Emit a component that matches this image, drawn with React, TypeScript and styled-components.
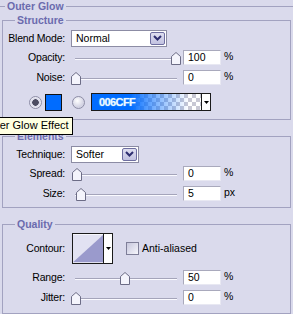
import React from 'react';
import styled, { createGlobalStyle } from 'styled-components';

const GlobalStyle = createGlobalStyle`
  html, body {
    margin: 0;
    padding: 0;
    background: #dadaec;
  }
  body {
    font-family: "Liberation Sans", Arial, sans-serif;
    font-size: 10.5px;
    color: #000;
  }
`;

const Panel = styled.div`
  position: relative;
  width: 293px;
  height: 314px;
  overflow: hidden;
  background: #dadaec;
`;

const OuterGroup = styled.fieldset`
  margin: 0;
  padding: 0;
  border: 0;
  border-top: 1px solid #a2a2c0;
  min-inline-size: 0;
`;

const Legend = styled.legend<{ $indent: number }>`
  margin-left: ${({ $indent }) => $indent}px;
  padding: 0 2px;
  font-weight: bold;
  font-size: 10.5px;
  line-height: 12px;
  color: #6b6bae;
`;

const Section = styled.fieldset<{ $top: number }>`
  margin: ${({ $top }) => $top}px 2px 0;
  padding: 0;
  border: 1px solid #a2a2c0;
  min-inline-size: 0;
`;

const Body = styled.div<{ $pt: number; $pb: number }>`
  display: flex;
  flex-direction: column;
  padding: ${({ $pt }) => $pt}px 0 ${({ $pb }) => $pb}px;
`;

const Row = styled.div<{ $mt?: number; $h?: number; $indent?: number }>`
  display: flex;
  align-items: center;
  height: ${({ $h }) => $h ?? 18}px;
  margin-top: ${({ $mt }) => $mt ?? 0}px;
  padding-left: ${({ $indent }) => $indent ?? 0}px;
`;

const Label = styled.span`
  width: 62px;
  margin-right: 6px;
  text-align: right;
  white-space: nowrap;
  letter-spacing: -0.2px;
`;

const SelectBox = styled.div<{ $w: number }>`
  display: flex;
  align-items: center;
  justify-content: space-between;
  box-sizing: border-box;
  width: ${({ $w }) => $w}px;
  height: 17px;
  padding: 0 1px 0 4px;
  background: #fff;
  border: 1px solid #8c8ca4;
`;

const DropButton = styled.span`
  display: flex;
  align-items: center;
  justify-content: center;
  box-sizing: border-box;
  width: 15px;
  height: 13px;
  background: linear-gradient(#dedef0, #c2c2e0);
  border: 1px solid #6e6ea0;
  border-radius: 2px;
`;

const SliderWrap = styled.div`
  position: relative;
  width: 112px;
  height: 18px;

  &::before {
    content: '';
    position: absolute;
    left: 4px;
    top: 10px;
    width: 102px;
    height: 1px;
    background: #a4a4ba;
    border-bottom: 1px solid #fafaff;
  }
`;

const Thumb = styled.svg`
  position: absolute;
  top: 4px;
  width: 10px;
  height: 13px;
`;

const NumBox = styled.div`
  box-sizing: border-box;
  width: 38px;
  height: 15px;
  padding: 0 4px;
  line-height: 13px;
  background: #fff;
  border: 1px solid #a9a9bc;
  border-right-color: #e8e8f2;
  border-bottom-color: #e8e8f2;
`;

const Unit = styled.span`
  margin-left: 3px;
  margin-top: -3px;
`;

const Radio = styled.span<{ $on?: boolean; $gap?: number }>`
  box-sizing: border-box;
  width: 13px;
  height: 13px;
  margin-left: ${({ $gap }) => $gap ?? 0}px;
  border-radius: 50%;
  border: 1px solid #8d8da6;
  background: ${({ $on }) =>
    $on
      ? 'radial-gradient(circle, #4c4c62 0 3px, #d6d6e6 3.5px, #f4f4fa 6px)'
      : 'radial-gradient(circle at 40% 35%, #ffffff 0, #d4d4e4 6px)'};
`;

const Swatch = styled.span`
  box-sizing: border-box;
  width: 17px;
  height: 17px;
  margin-left: 3px;
  background: #006cff;
  border: 1px solid #111;
`;

const GradientBox = styled.div`
  display: flex;
  box-sizing: border-box;
  width: 120px;
  height: 18px;
  margin-left: 6px;
  border: 1px solid #1a1a1a;
  background:
    linear-gradient(to right, #006cff 0%, #006cff 32%, rgba(0, 108, 255, 0.55) 52%, rgba(0, 108, 255, 0) 82%),
    repeating-conic-gradient(#c8c8d4 0 25%, #ffffff 0 50%) 0 0 / 8px 8px;
`;

const HexText = styled.span`
  flex: 1;
  padding-left: 7px;
  font-size: 11px;
  font-weight: bold;
  letter-spacing: -0.6px;
  line-height: 16px;
  color: #eef8ff;
  text-shadow: 0 0 1px #5fb4ff, 0 0 1px #5fb4ff;
`;

const ArrowPart = styled.span`
  display: flex;
  align-items: center;
  justify-content: center;
  width: 8px;
  background: #fff;
  border-left: 1px solid #1a1a1a;
`;

const ContourBox = styled.div`
  display: flex;
  box-sizing: border-box;
  width: 41px;
  height: 31px;
  margin-left: 1px;
  border: 1px solid #1a1a1a;
  background: #fff;
`;

const ContourPreview = styled.svg`
  width: 32px;
  height: 29px;
  display: block;
`;

const Check = styled.span`
  box-sizing: border-box;
  width: 13px;
  height: 13px;
  margin-left: 13px;
  border: 1px solid #7e7e98;
  background: linear-gradient(135deg, #c6c6dc, #f6f6fc);
`;

const CheckLabel = styled.span`
  margin-left: 3px;
`;

const Tooltip = styled.div`
  position: absolute;
  left: -22px;
  top: 117px;
  padding: 1px 3px 2px;
  font-size: 11px;
  line-height: 13px;
  white-space: nowrap;
  background: #ffffe1;
  border: 1px solid #000;
`;

function Chevron() {
  return (
    <svg width="9" height="6" viewBox="0 0 9 6">
      <path d="M1 1 L4.5 4.5 L8 1" fill="none" stroke="#2e2e70" strokeWidth="2" />
    </svg>
  );
}

function DownTriangle() {
  return (
    <svg width="5" height="3" viewBox="0 0 5 3">
      <path d="M0 0 H5 L2.5 3 Z" fill="#000" />
    </svg>
  );
}

function Select({ value, width }: { value: string; width: number }) {
  return (
    <SelectBox $w={width}>
      <span>{value}</span>
      <DropButton>
        <Chevron />
      </DropButton>
    </SelectBox>
  );
}

function Slider({ pos }: { pos: number }) {
  return (
    <SliderWrap>
      <Thumb viewBox="0 0 10 13" style={{ left: pos }}>
        <path
          d="M0.5 4.5 L5 0.5 L9.5 4.5 V12.5 H0.5 Z"
          fill="#f4f4fc"
          stroke="#6c6c86"
          strokeWidth="1"
        />
      </Thumb>
    </SliderWrap>
  );
}

function SliderRow({ label, pos, value, unit, mt }: { label: string; pos: number; value: string; unit: string; mt?: number }) {
  return (
    <Row $mt={mt}>
      <Label>{label}</Label>
      <Slider pos={pos} />
      <NumBox>{value}</NumBox>
      <Unit>{unit}</Unit>
    </Row>
  );
}

export default function App() {
  return (
    <>
      <GlobalStyle />
      <Panel>
        <OuterGroup>
          <Legend $indent={5}>Outer Glow</Legend>

          <Section $top={2}>
            <Legend $indent={12}>Structure</Legend>
            <Body $pt={3} $pb={8}>
              <Row>
                <Label>Blend Mode:</Label>
                <Select value="Normal" width={96} />
              </Row>
              <SliderRow label="Opacity:" pos={100} value="100" unit="%" mt={1} />
              <SliderRow label="Noise:" pos={0} value="0" unit="%" mt={2} />
              <Row $mt={7} $indent={26}>
                <Radio $on />
                <Swatch />
                <Radio $gap={10} />
                <GradientBox>
                  <HexText>006CFF</HexText>
                  <ArrowPart>
                    <DownTriangle />
                  </ArrowPart>
                </GradientBox>
              </Row>
            </Body>
          </Section>

          <Section $top={10}>
            <Legend $indent={12}>Elements</Legend>
            <Body $pt={3} $pb={5}>
              <Row>
                <Label>Technique:</Label>
                <Select value="Softer" width={68} />
              </Row>
              <SliderRow label="Spread:" pos={1} value="0" unit="%" mt={1} />
              <SliderRow label="Size:" pos={5} value="5" unit="px" mt={2} />
            </Body>
          </Section>

          <Section $top={10}>
            <Legend $indent={12}>Quality</Legend>
            <Body $pt={2} $pb={7}>
              <Row $h={32}>
                <Label>Contour:</Label>
                <ContourBox>
                  <ContourPreview viewBox="0 0 32 29">
                    <rect width="32" height="29" fill="#e2e2f2" />
                    <path d="M0 29 L32 0 V29 Z" fill="#9a9acc" />
                  </ContourPreview>
                  <ArrowPart>
                    <DownTriangle />
                  </ArrowPart>
                </ContourBox>
                <Check />
                <CheckLabel>Anti-aliased</CheckLabel>
              </Row>
              <SliderRow label="Range:" pos={49} value="50" unit="%" mt={4} />
              <SliderRow label="Jitter:" pos={0} value="0" unit="%" mt={2} />
            </Body>
          </Section>
        </OuterGroup>

        <Tooltip>Outer Glow Effect</Tooltip>
      </Panel>
    </>
  );
}
